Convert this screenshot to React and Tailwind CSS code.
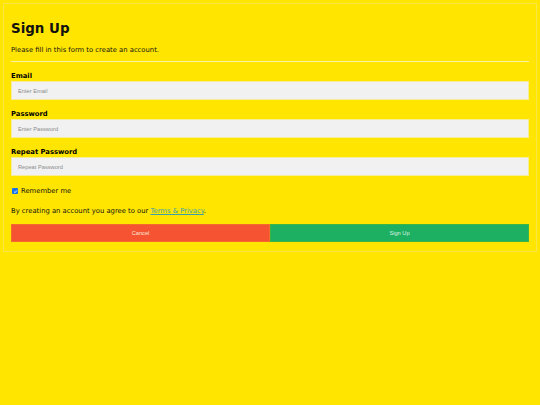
import React from 'react';

const Field = ({ label, type, placeholder }) => (
  <>
    <label className="block text-[6.8px] leading-[8px] font-bold text-black">{label}</label>
    <input
      type={type}
      placeholder={placeholder}
      className="block w-full h-[19px] mt-[1px] mb-[10px] px-[6px] bg-[#f1f1f1] border border-[#f6ec9a] text-[5.7px] outline-none placeholder:text-[#8c8c8c] [font-family:'Liberation_Sans',Arial,sans-serif]"
    />
  </>
);

export default function App() {
  return (
    <div className="min-h-[405px] bg-[#ffe500] p-[3px] [font-family:'DejaVu_Sans',Verdana,sans-serif] text-[#111]">
      <form className="border border-[#f7e645] px-[7px] pt-[8px] pb-[9px]">
        <h1 className="mt-[9px] mb-[9px] text-[13.4px] leading-[16px] font-bold">Sign Up</h1>
        <p className="text-[6.8px] leading-[8px]">Please fill in this form to create an account.</p>
        <hr className="mt-[7px] mb-[10px] border-0 h-[1px] bg-[#fff3a6]" />

        <Field label="Email" type="text" placeholder="Enter Email" />
        <Field label="Password" type="password" placeholder="Enter Password" />
        <Field label="Repeat Password" type="password" placeholder="Repeat Password" />

        <label className="flex items-center gap-[3px] pt-[1px] text-[6.8px] leading-[8px] pl-[1px]">
          <span className="flex items-center justify-center w-[6px] h-[6px] rounded-[1px] bg-[#1a73e8]">
            <svg viewBox="0 0 10 10" className="w-[5px] h-[5px]">
              <path d="M2 5.2 L4.2 7.3 L8 2.8" fill="none" stroke="white" strokeWidth="1.6" />
            </svg>
          </span>
          Remember me
        </label>

        <p className="mt-[12px] text-[6.8px] leading-[8px]">
          By creating an account you agree to our{' '}
          <a href="#" className="text-[#3d9fa6] underline">Terms &amp; Privacy</a>.
        </p>

        <div className="flex mt-[9px]">
          <button type="button" className="flex-1 h-[18px] bg-[#f55331] border border-[#f46a2c] text-[5.7px] text-[#fde5dc] [font-family:'Liberation_Sans',Arial,sans-serif]">
            Cancel
          </button>
          <button type="submit" className="flex-1 h-[18px] bg-[#1db062] border border-[#3cb545] text-[5.7px] text-[#d9f0e0] [font-family:'Liberation_Sans',Arial,sans-serif]">
            Sign Up
          </button>
        </div>
      </form>
    </div>
  );
}
